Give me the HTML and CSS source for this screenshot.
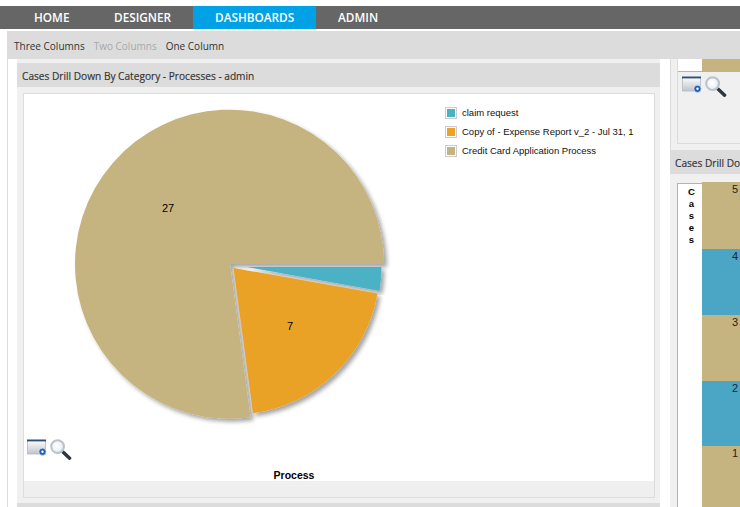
FILE: index.html
```html
<!DOCTYPE html>
<html lang="en">
<head>
  <meta charset="UTF-8" />
  <title>Dashboards</title>
  <link rel="stylesheet" href="styles.css">
</head>
<body>

  <!-- shared toolbar icons -->
  <svg class="icon-defs" width="0" height="0">
    <defs>
      <linearGradient id="win-body" x1="0" y1="0" x2="0" y2="1">
        <stop offset="0" stop-color="#ffffff"/>
        <stop offset="1" stop-color="#bfc4cc"/>
      </linearGradient>
      <radialGradient id="lens" cx="0.45" cy="0.45" r="0.55">
        <stop offset="0" stop-color="#ffffff"/>
        <stop offset="0.7" stop-color="#eef3f7"/>
        <stop offset="1" stop-color="#c3d0da"/>
      </radialGradient>
      <filter id="slice-shadow" x="-10%" y="-10%" width="125%" height="125%">
        <feDropShadow dx="3" dy="3" stdDeviation="2" flood-color="#000" flood-opacity="0.36"/>
      </filter>
      <symbol id="icon-window" viewBox="0 0 20 17">
        <rect x="0.5" y="1" width="18" height="14" fill="url(#win-body)" stroke="#b4b8c0" stroke-width="0.8"/>
        <rect x="0" y="0.6" width="19" height="1.8" fill="#2a4f80"/>
        <circle cx="15.5" cy="12.8" r="3.6" fill="#1f62b4" stroke="#e8eef6" stroke-width="0.6"/>
        <circle cx="15.5" cy="12.8" r="1.2" fill="#fff"/>
      </symbol>
      <symbol id="icon-zoom" viewBox="0 0 22 21">
        <path d="M13 13 L19.6 19.2" stroke="#30363d" stroke-width="3.4" stroke-linecap="round"/>
        <circle cx="7.6" cy="7.6" r="6.4" fill="url(#lens)" stroke="#b9c3cb" stroke-width="2"/>
      </symbol>
    </defs>
  </svg>

  <!-- top menu -->
  <nav class="main-nav">
    <a class="nav-item">Home</a>
    <a class="nav-item">Designer</a>
    <a class="nav-item active">Dashboards</a>
    <a class="nav-item">Admin</a>
  </nav>

  <div class="layout-bar">
    <a class="layout-link">Three Columns</a>
    <a class="layout-link disabled">Two Columns</a>
    <a class="layout-link">One Column</a>
  </div>

  <div class="columns">

    <!-- main column -->
    <div class="col-main">
      <section class="panel">
        <h2 class="panel-title">Cases Drill Down By Category - Processes - admin</h2>
        <div class="panel-body">
          <div class="chart-box">
            <div class="chart">
              <svg class="pie" width="630" height="336" viewBox="24 94 630 336">
                <g filter="url(#slice-shadow)">
                  <path fill="#c5b47f" d="M230 264 L384 264 A154.5 154.5 0 1 0 250.5 417.2 Z"/>
                </g>
                <g filter="url(#slice-shadow)">
                  <path fill="#4bb2c5" d="M247 267 L381.5 267 A149.5 149.5 0 0 1 379.5 291 Z"/>
                </g>
                <g filter="url(#slice-shadow)">
                  <path fill="#eaa228" d="M233.5 268 L377.5 293.5 A146.5 146.5 0 0 1 253 413.3 Z"/>
                </g>
                <text class="pie-label" x="168" y="212">27</text>
                <text class="pie-label" x="290" y="330">7</text>
              </svg>

              <ul class="legend">
                <li class="legend-row"><span class="swatch teal"></span>claim request</li>
                <li class="legend-row"><span class="swatch orange"></span>Copy of - Expense Report v_2 - Jul 31, 1</li>
                <li class="legend-row"><span class="swatch tan"></span>Credit Card Application Process</li>
              </ul>

              <div class="chart-tools">
                <svg class="tool-window"><use href="#icon-window"/></svg>
                <svg class="tool-zoom"><use href="#icon-zoom"/></svg>
              </div>
              <div class="axis-title">Process</div>
            </div>
            <div class="chart-foot"></div>
          </div>
        </div>
      </section>
      <div class="panel-title next-title"></div>
    </div>

    <!-- right column, cut off by the window -->
    <div class="col-side">
      <section class="panel side-top">
        <div class="side-box">
          <div class="mini-chart">
            <div class="mini-axis"></div>
            <div class="mini-bar"></div>
          </div>
          <div class="chart-tools side-tools">
            <svg class="tool-window"><use href="#icon-window"/></svg>
            <svg class="tool-zoom"><use href="#icon-zoom"/></svg>
          </div>
        </div>
      </section>

      <section class="panel">
        <h2 class="panel-title side-title">Cases Drill Down By Category</h2>
        <div class="bar-chart">
          <div class="y-title">Cases</div>
          <div class="bars">
            <div class="bar tan first">5</div>
            <div class="bar blue">4</div>
            <div class="bar tan">3</div>
            <div class="bar blue short">2</div>
            <div class="bar tan">1</div>
          </div>
        </div>
      </section>
    </div>

  </div>

</body>
</html>
```

FILE: styles.css
```css
/* Reset */
* {
  margin: 0;
  padding: 0;
  box-sizing: border-box;
}

html, body {
  height: 100%;
  overflow: hidden;
}

body {
  width: 740px;
  background: #fff;
  font-family: "Open Sans", sans-serif;
  color: #333;
  padding-top: 6px;
}

.icon-defs {
  position: absolute;
}

/* Top menu */
.main-nav {
  display: flex;
  height: 23px;
  padding-left: 12px;
  background: #666;
}

.nav-item {
  padding: 0 22px;
  font-size: 11.75px;
  font-weight: 600;
  line-height: 23px;
  color: #fff;
  text-transform: uppercase;
}

.nav-item:first-child {
  padding-right: 22.6px;
}

.nav-item.active {
  background: #00a2e5;
}

/* Column switcher */
.layout-bar {
  display: flex;
  gap: 9px;
  height: 28px;
  margin: 2px 0 0 7px;
  padding-left: 7px;
  background: #dcdcdc;
  font-size: 10px;
  line-height: 31px;
}

.layout-link.disabled {
  color: #a8a8a8;
}

/* Columns */
.columns {
  display: flex;
  gap: 10px;
  height: 448px;
  margin-left: 7px;
  padding-left: 9px;
  border-left: 1px solid #dcdcdc;
  overflow: hidden;
}

.col-main {
  flex: 0 0 643px;
  padding-top: 4px;
  background: #f0f0f0;
}

.col-side {
  flex: 0 0 70px;
  overflow: hidden;
}

.panel {
  background: #f0f0f0;
}

.panel-title {
  height: 24px;
  padding-left: 5px;
  background: #dcdcdc;
  font-size: 10.15px;
  font-weight: 400;
  line-height: 26px;
  white-space: nowrap;
  -webkit-text-stroke: 0.15px #333;
}

.panel-body {
  padding: 6px 5px 5px 6px;
}

.chart-box {
  border: 1px solid #dcdcdc;
}

.chart {
  position: relative;
  height: 387px;
  background: #fff;
}

.pie {
  display: block;
}

.pie-label {
  font-family: "Liberation Sans", sans-serif;
  font-size: 11px;
  fill: #000;
  text-anchor: middle;
}

/* Legend */
.legend {
  position: absolute;
  top: 9px;
  left: 421px;
  list-style: none;
  font-family: "Liberation Sans", sans-serif;
  font-size: 9.5px;
  color: #111;
}

.legend-row {
  display: flex;
  align-items: center;
  gap: 5px;
  height: 19px;
  white-space: nowrap;
}

.swatch {
  width: 12px;
  height: 12px;
  border: 1px solid #ccc;
  padding: 1px;
  background-clip: content-box;
}

.swatch.teal { background-color: #4bb2c5; }
.swatch.orange { background-color: #eaa228; }
.swatch.tan { background-color: #c5b47f; }

/* Icons under the chart */
.chart-tools {
  display: flex;
  gap: 3px;
  margin: 9px 0 0 3px;
}

.tool-window {
  width: 20px;
  height: 17px;
}

.tool-zoom {
  width: 22px;
  height: 21px;
}

.axis-title {
  width: 540px;
  margin-top: 9px;
  font-family: "Liberation Sans", sans-serif;
  font-size: 10.5px;
  font-weight: 700;
  text-align: center;
  color: #000;
}

.chart-foot {
  height: 16px;
  background: #efefef;
}

.next-title {
  height: 10px;
}

/* Right column */
.side-top {
  height: 91px;
  padding: 0 0 6px 6px;
  border-left: 1px solid #dcdcdc;
}

.side-box {
  width: 120px;
  height: 85px;
  border: 1px solid #dcdcdc;
  border-top: 0;
}

.mini-chart {
  display: flex;
  height: 13px;
}

.mini-axis {
  width: 24px;
  background: #fff;
  border-bottom: 1px solid #c5b47f;
}

.mini-bar {
  flex: 1;
  background: #c5b47f;
}

.side-tools {
  margin: 4px 0 0 4px;
}

.side-title {
  padding-left: 5px;
}

.bar-chart {
  display: flex;
  margin: 8px 0 0 7px;
  height: 400px;
}

.y-title {
  width: 25px;
  margin-top: 1px;
  padding-top: 2px;
  background: #fff;
  border: 1px solid #c5b47f;
  border-width: 1px 0 0 1px;
  font-family: "Liberation Sans", sans-serif;
  font-size: 9.5px;
  font-weight: 700;
  line-height: 12px;
  color: #000;
  writing-mode: vertical-lr;
  text-orientation: upright;
  text-align: left;
  letter-spacing: 1px;
  padding-left: 7px;
}

.bars {
  flex: 1;
}

.bar {
  height: 66px;
  padding: 1px 2px 0 0;
  font-family: "Liberation Sans", sans-serif;
  font-size: 11px;
  line-height: 12px;
  text-align: right;
  color: #222;
}

.bar.first { height: 67px; }
.bar.short { height: 65px; }
.bar.tan { background: #c5b47f; }
.bar.blue { background: #4ba6c6; }
```
